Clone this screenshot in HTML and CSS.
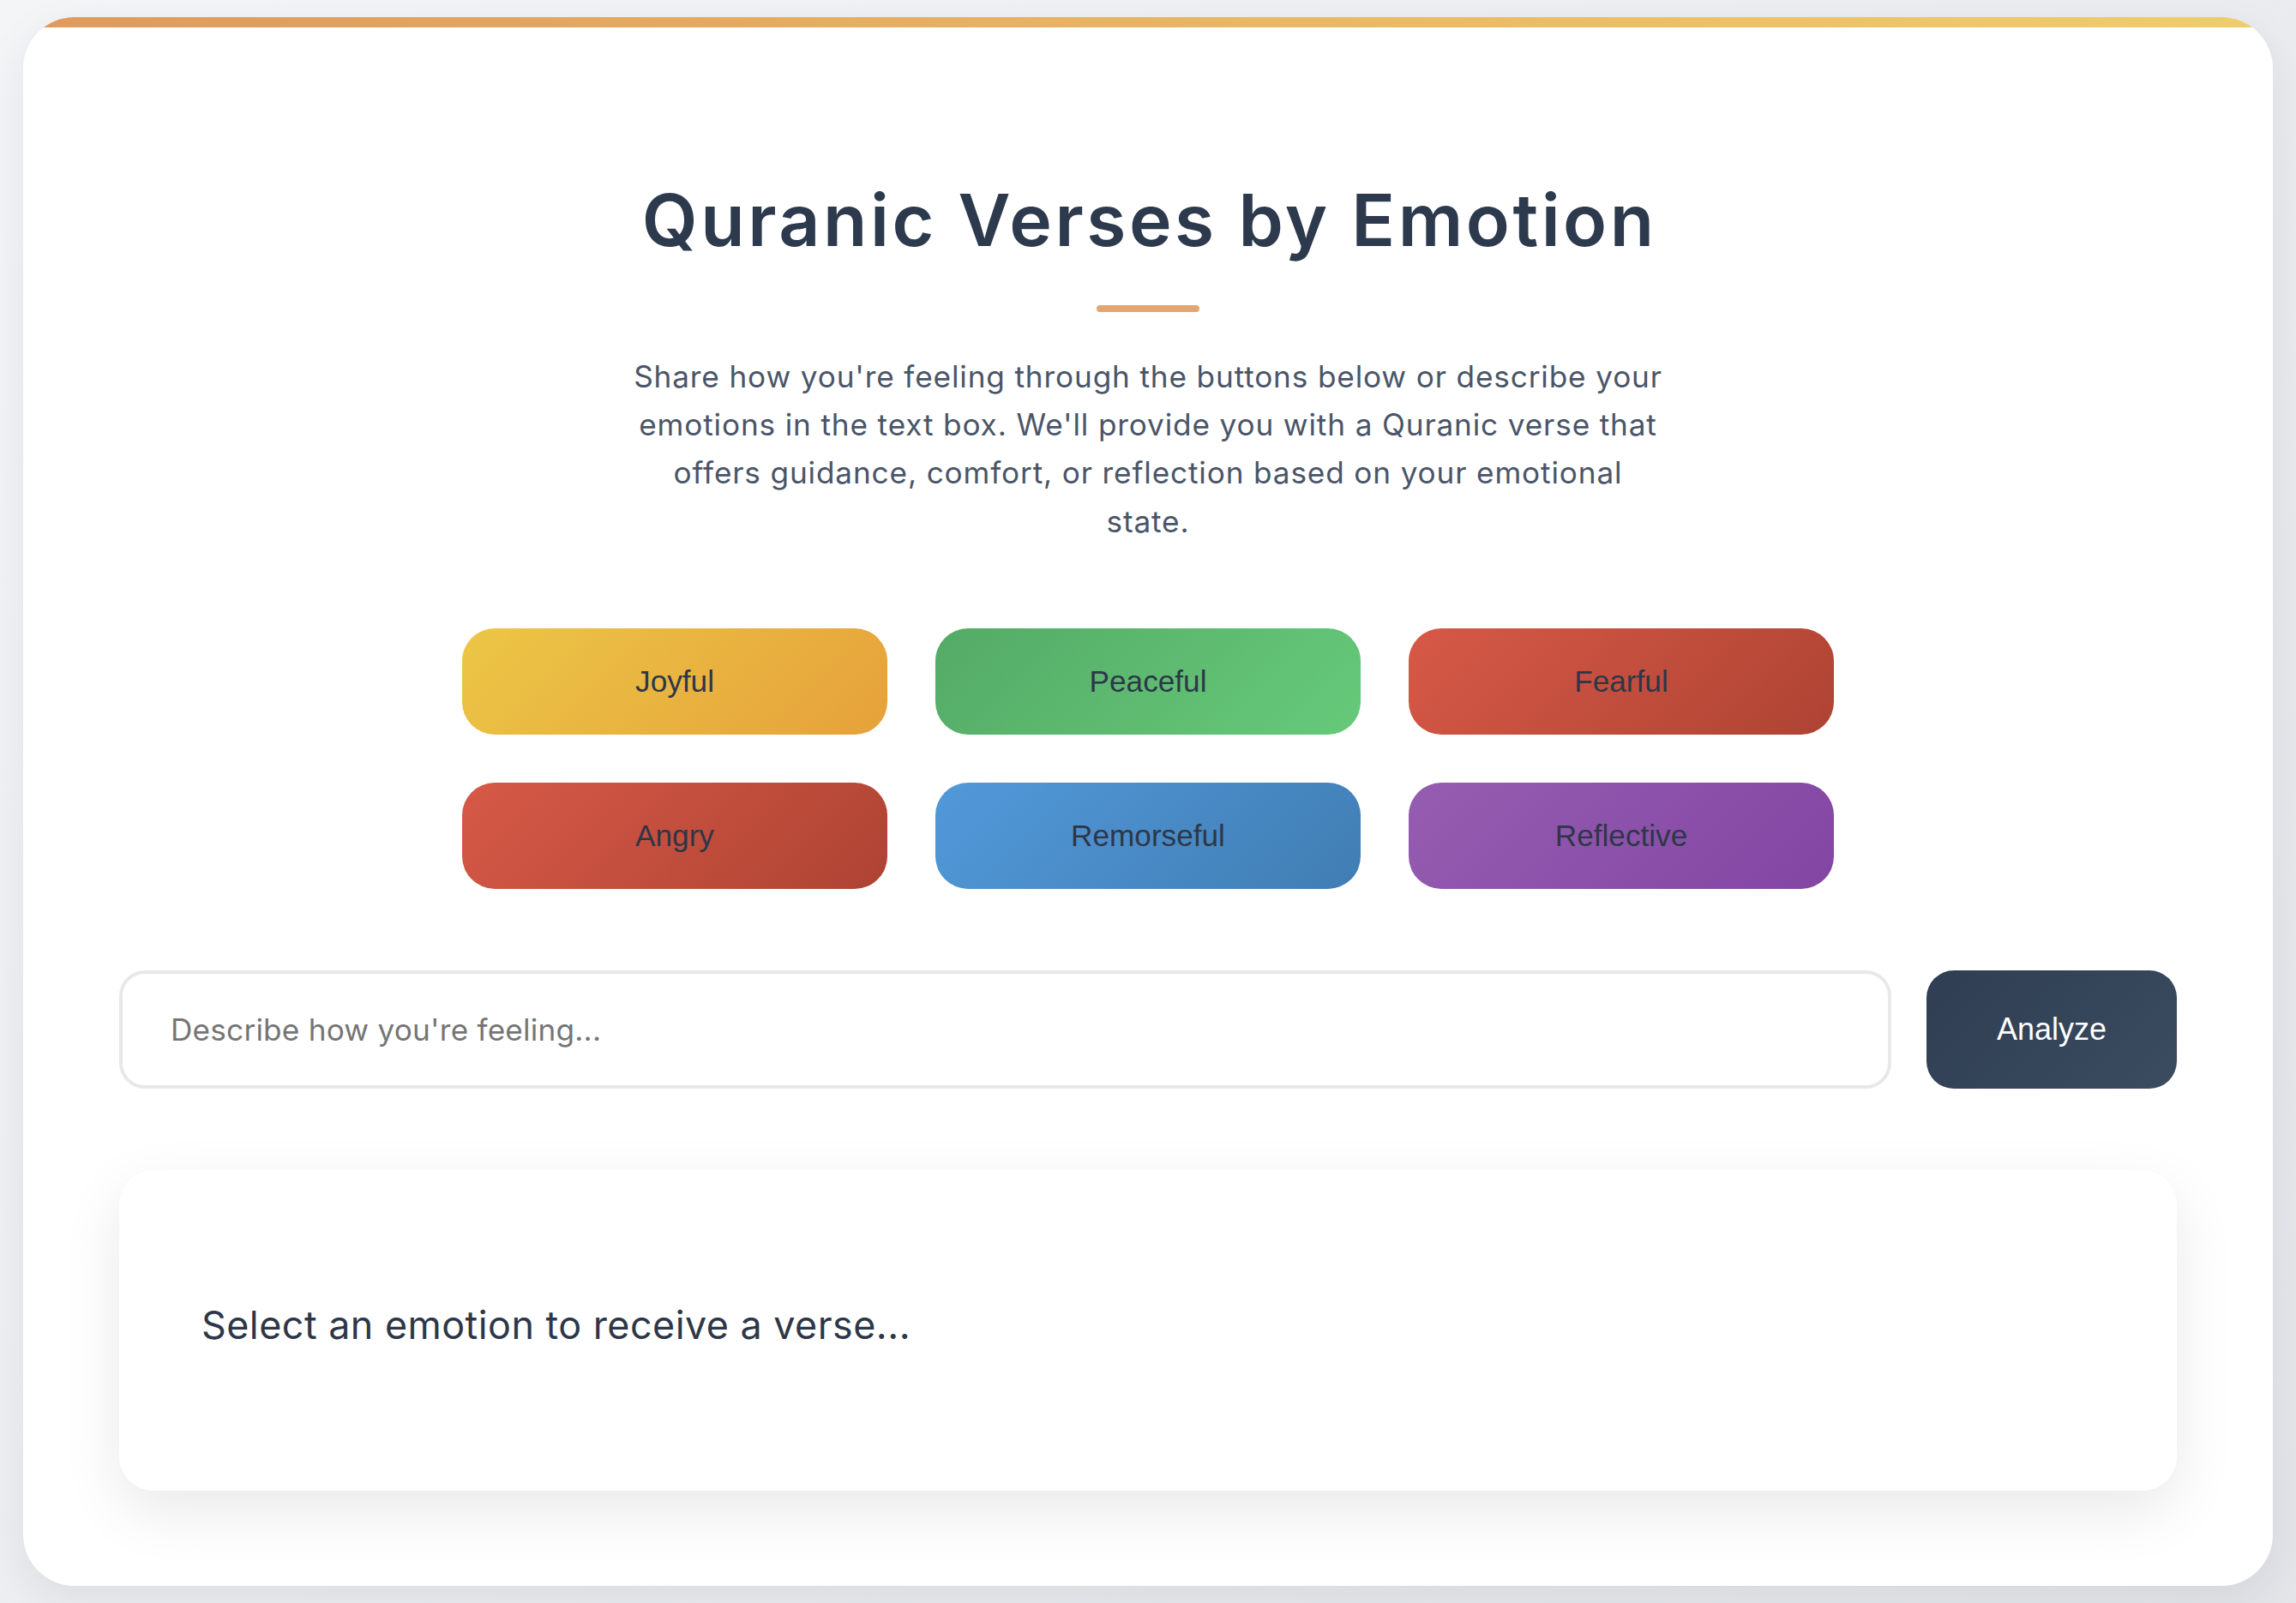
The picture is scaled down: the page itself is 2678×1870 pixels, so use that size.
FILE: index.html
```html
<!DOCTYPE html>
<html lang="en">
<head>
<meta charset="utf-8">
<title>Quranic Verses by Emotion</title>
<link rel="stylesheet" href="styles.css">
</head>
<body>
<main class="card">
  <div class="topbar"></div>
  <div class="inner">
    <header class="header">
      <h1 class="title">Quranic Verses by Emotion</h1>
      <div class="rule"></div>
      <p class="intro">Share how you're feeling through the buttons below or describe your<br>emotions in the text box. We'll provide you with a Quranic verse that<br>offers guidance, comfort, or reflection based on your emotional<br>state.</p>
    </header>
    <div class="emotions">
      <button class="emo joyful">Joyful</button>
      <button class="emo peaceful">Peaceful</button>
      <button class="emo fearful">Fearful</button>
      <button class="emo angry">Angry</button>
      <button class="emo remorseful">Remorseful</button>
      <button class="emo reflective">Reflective</button>
    </div>
    <div class="ask">
      <input class="feel" type="text" placeholder="Describe how you're feeling...">
      <button class="analyze">Analyze</button>
    </div>
    <section class="result">
      <p class="result-text">Select an emotion to receive a verse...</p>
    </section>
  </div>
</main>
</body>
</html>
```
FILE: styles.css
```css
* { box-sizing: border-box; }
html, body { margin: 0; }
body {
  min-height: 100vh;
  padding: 20px 27px;
  background: linear-gradient(135deg, #f4f5f7 0%, #e3e5e9 100%);
  font-family: "Inter", "Noto Sans", sans-serif;
  color: #2d3a4d;
}
.card {
  background: #ffffff;
  border-radius: 60px;
  overflow: hidden;
  box-shadow: 0 16px 50px rgba(30, 40, 60, 0.08);
  height: 1830px;
}
.topbar {
  height: 12px;
  background: linear-gradient(90deg, #df995c 0%, #e8b862 55%, #efcd6a 100%);
}
.inner {
  padding: 175px 80px 0;
}
.header {
  display: flex;
  flex-direction: column;
  align-items: center;
}
.title {
  margin: 0;
  font-size: 84px;
  line-height: 1.2;
  font-weight: 600;
  color: #2d3a4d;
  letter-spacing: 3.5px;
  text-indent: 3.5px;
}
.rule {
  width: 120px;
  height: 8px;
  border-radius: 4px;
  background: #e2a672;
  margin-top: 48px;
}
.intro {
  margin: 47px 0 0;
  font-size: 35.2px;
  line-height: 56.3px;
  letter-spacing: 0.85px;
  color: #4a5568;
  text-align: center;
}
.emotions {
  width: 1600px;
  margin: 97px auto 0;
  display: grid;
  grid-template-columns: repeat(3, 1fr);
  gap: 56px;
}
.emo {
  height: 124px;
  border: none;
  border-radius: 38px;
  font-family: "Liberation Sans", Arial, sans-serif;
  font-size: 35.2px;
  color: #2d3748;
  cursor: pointer;
}
.joyful { background: linear-gradient(135deg, #ecc646 0%, #e6a13a 100%); }
.peaceful { background: linear-gradient(135deg, #54aa66 0%, #66ca7a 100%); }
.fearful, .angry { background: linear-gradient(135deg, #d75947 0%, #ae4333 100%); }
.remorseful { background: linear-gradient(135deg, #5299da 0%, #407db3 100%); }
.reflective { background: linear-gradient(135deg, #955db1 0%, #8345a3 100%); }
.ask {
  max-width: 2400px;
  margin: 95px auto 0;
  display: flex;
  gap: 41px;
  height: 138px;
}
.feel {
  flex: 1;
  min-width: 0;
  border: 4px solid #e8e8e8;
  border-radius: 30px;
  padding: 0 56px;
  font-family: "Inter", "Noto Sans", sans-serif;
  font-size: 35.2px;
  letter-spacing: 0.2px;
  color: #2d3748;
  background: #fff;
  outline: none;
}
.feel::placeholder { color: #757575; }
.analyze {
  width: 292px;
  border: none;
  border-radius: 32px;
  background: linear-gradient(135deg, #2f3e52 0%, #3b4b60 100%);
  color: #ffffff;
  font-family: "Liberation Sans", Arial, sans-serif;
  font-size: 36px;
  cursor: pointer;
}
.result {
  max-width: 2400px;
  margin: 95px auto 0;
  height: 374px;
  border-radius: 40px;
  background: #ffffff;
  box-shadow: 0 24px 70px rgba(0, 0, 0, 0.09);
  display: flex;
  align-items: center;
  padding: 0 96px 12px;
}
.result-text {
  margin: 0;
  font-size: 44.8px;
  letter-spacing: 0.5px;
  color: #2d3748;
}
```
